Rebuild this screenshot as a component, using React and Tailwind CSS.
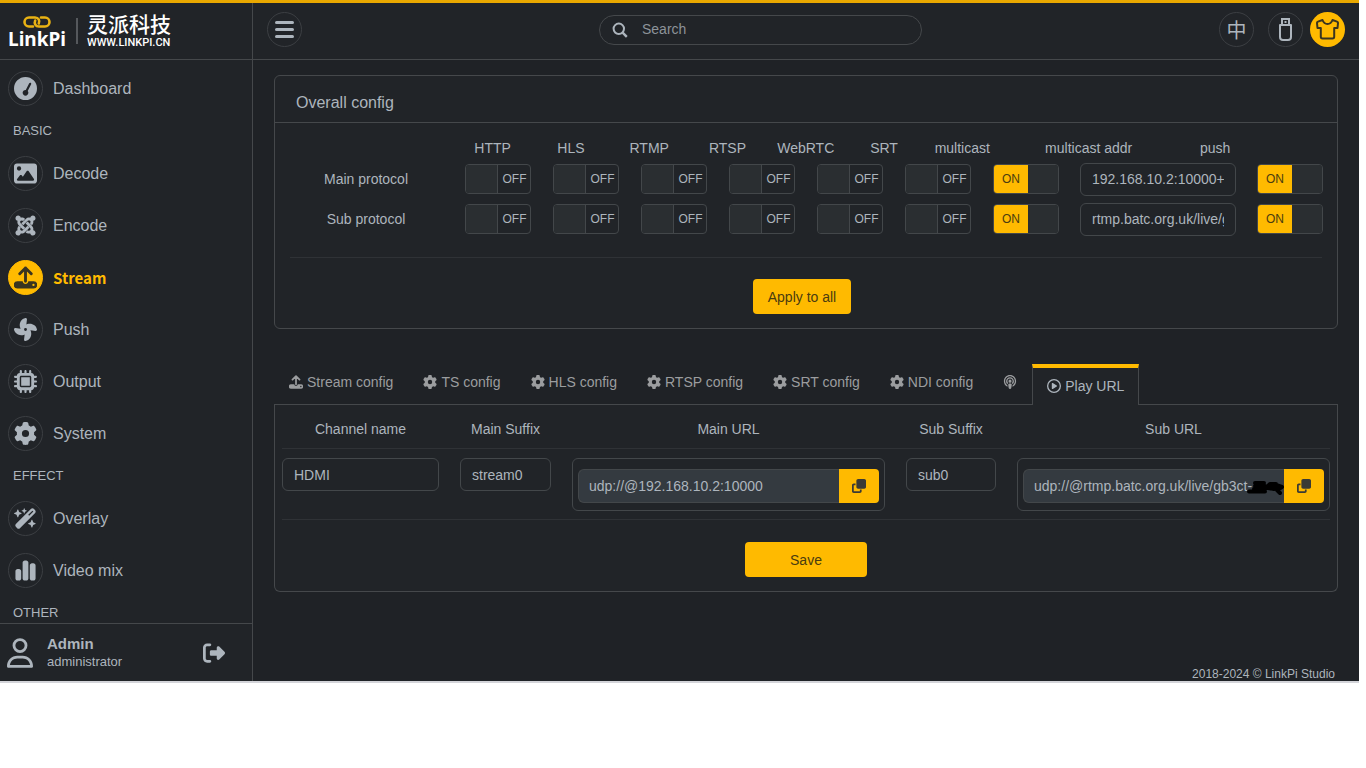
import { useState } from "react";
import clsx from "clsx";
import {
  FaChartSimple,
  FaClone,
  FaFan,
  FaGaugeSimpleHigh,
  FaGear,
  FaImage,
  FaJoomla,
  FaMicrochip,
  FaPodcast,
  FaRegCirclePlay,
  FaRegUser,
  FaRightFromBracket,
  FaWandMagicSparkles,
} from "react-icons/fa6";

const PROTOCOLS = ["HTTP", "HLS", "RTMP", "RTSP", "WebRTC", "SRT", "multicast"];

const MENU = [
  { items: [{ name: "Dashboard", icon: FaGaugeSimpleHigh }] },
  {
    title: "BASIC",
    items: [
      { name: "Decode", icon: FaImage },
      { name: "Encode", icon: FaJoomla },
      { name: "Stream", icon: UploadIcon, active: true },
      { name: "Push", icon: FaFan },
      { name: "Output", icon: FaMicrochip },
      { name: "System", icon: FaGear },
    ],
  },
  {
    title: "EFFECT",
    items: [
      { name: "Overlay", icon: FaWandMagicSparkles },
      { name: "Video mix", icon: FaChartSimple },
    ],
  },
  { title: "OTHER", items: [] },
];

const TABS = [
  { name: "Stream config", icon: UploadIcon },
  { name: "TS config", icon: FaGear },
  { name: "HLS config", icon: FaGear },
  { name: "RTSP config", icon: FaGear },
  { name: "SRT config", icon: FaGear },
  { name: "NDI config", icon: FaGear },
  { label: "WebRTC", icon: FaPodcast },
  { name: "Play URL", icon: FaRegCirclePlay, active: true },
];

// Arrow rising out of a drive
function UploadIcon({ className }) {
  return (
    <svg viewBox="0 0 24 24" className={className} fill="none" aria-hidden="true">
      <path
        d="M12 16V2M6 8l6-6 6 6"
        stroke="currentColor"
        strokeWidth="3"
        strokeLinecap="round"
        strokeLinejoin="round"
      />
      <path
        d="M3.500 16H9c.4 1.900 1.500 2.800 3 2.800s2.600-.9 3-2.800h5.500a3.500 3.500 0 0 1 0 7.500h-17a3.500 3.500 0 0 1 0-7.500Zm16.800 2.500a1.200 1.200 0 1 0 0 2.400 1.200 1.200 0 0 0 0-2.400Z"
        fill="currentColor"
        fillRule="evenodd"
      />
    </svg>
  );
}

function UsbIcon() {
  return (
    <svg viewBox="0 0 13 23" className="h-[23px] w-[13px]" fill="none" stroke="currentColor" strokeWidth="2" aria-hidden="true">
      <path d="M3 7V1h7v6" />
      <path d="M1 7h11v12a3 3 0 0 1-3 3H4a3 3 0 0 1-3-3Z" strokeLinejoin="round" />
      <path d="M5.500 4h2" strokeWidth="2" />
    </svg>
  );
}

function ShirtIcon() {
  return (
    <svg viewBox="0 0 23 21" className="h-[21px] w-[23px]" fill="none" stroke="currentColor" strokeWidth="2" strokeLinejoin="round" aria-hidden="true">
      <path d="M6.500 1 2 2.600a1.500 1.500 0 0 0-1 1.500L1.500 9h3.300v8.800c0 1 .7 1.700 1.700 1.700h10c1 0 1.700-.7 1.700-1.700V9h3.300l.5-4.900a1.500 1.500 0 0 0-1-1.500L16.500 1c-.9 2.400-2.200 4-5 4s-4.100-1.600-5-4Z" />
    </svg>
  );
}

function SearchIcon() {
  return (
    <svg viewBox="0 0 16 16" className="size-4 shrink-0" fill="none" stroke="currentColor" strokeWidth="2" aria-hidden="true">
      <circle cx="6.800" cy="6.800" r="5.200" />
      <path d="m10.600 10.600 4.200 4.200" strokeWidth="2.400" />
    </svg>
  );
}

function Logo() {
  return (
    <a href="#home" aria-label="LinkPi" className="flex h-[57px] items-center border-b border-[#45484b] pl-[7px] text-white">
      <div className="flex w-[60px] flex-col items-center pt-1">
        <svg viewBox="0 0 28 12" className="h-3 w-7" fill="none" stroke="#e9b213" strokeWidth="2.600" strokeLinecap="round" aria-hidden="true">
          <path d="M10 10.500H6a4.500 4.500 0 0 1 0-9h6c3.600 0 5 3.200 3.800 6" />
          <path d="M18 1.500h4a4.500 4.500 0 0 1 0 9h-6c-3.600 0-5-3.200-3.800-6" />
        </svg>
        <span className="font-['Noto_Sans',sans-serif] text-[19px]/[22px] font-bold">LinkPi</span>
      </div>
      <span className="ml-[9px] h-[26px] w-0.5 bg-[#55585c]" />
      <div className="ml-[9px] flex flex-col gap-1">
        <span className="font-['Noto_Sans_CJK_SC',sans-serif] text-[21px]/[20px] font-medium">灵派科技</span>
        <span className="font-['Roboto',sans-serif] text-[11px]/[12px] font-medium">WWW.LINKPI.CN</span>
      </div>
    </a>
  );
}

function Sidebar() {
  return (
    <aside className="flex w-[253px] shrink-0 flex-col border-r border-[#45484b] bg-[#212428]">
      <Logo />
      <nav className="min-h-0 flex-1 overflow-hidden pt-[3px]">
        {MENU.map((group, i) => (
          <div key={i}>
            {group.title && <h2 className="h-[33px] pl-[13px] text-[13px]/[32px]">{group.title}</h2>}
            {group.items.map(({ name, icon: Icon, active }) => (
              <a
                key={name}
                href={`#${name}`}
                className={clsx("flex items-center gap-[10px] pt-2 pb-[9px] pl-2", active && "text-[#ffba00]")}
              >
                <span
                  className={clsx(
                    "flex size-[35px] items-center justify-center rounded-full border",
                    active ? "border-[#ffba00] bg-[#ffba00] text-[#3a3520]" : "border-[#3c3f43]",
                  )}
                >
                  <Icon className="size-[23px]" />
                </span>
                <span
                  className={clsx(
                    active ? "font-['Noto_Sans_CJK_SC','Noto_Sans',sans-serif] text-[15px]/[20px] font-bold" : "text-[16px]/[20px]",
                  )}
                >
                  {name}
                </span>
              </a>
            ))}
          </div>
        ))}
      </nav>
      <div className="flex h-[58px] shrink-0 items-center border-t border-[#45484b] pl-[7px]">
        <FaRegUser className="h-[30px] w-[26px]" />
        <div className="ml-[14px] flex flex-1 flex-col">
          <strong className="text-[15px]/[19px]">Admin</strong>
          <span className="text-[13px]/[18px]">administrator</span>
        </div>
        <button type="button" aria-label="Log out" className="mr-[27px]">
          <FaRightFromBracket className="size-[22px]" />
        </button>
      </div>
    </aside>
  );
}

function Header() {
  const round = "flex size-[35px] items-center justify-center rounded-full border border-[#3c3f43]";
  return (
    <header className="flex h-[57px] shrink-0 items-center justify-between border-b border-[#45484b] bg-[#212428] px-[14px] pb-[3px]">
      <button type="button" aria-label="Toggle menu" className={round}>
        <svg viewBox="0 0 21 19" className="h-[19px] w-[21px]" stroke="currentColor" strokeWidth="3" strokeLinecap="round" aria-hidden="true">
          <path d="M2.500 2.500h16M2.500 9.500h16M2.500 16.500h16" />
        </svg>
      </button>
      <label className="flex h-[30px] w-[323px] items-center gap-[14px] rounded-full border border-[#45484b] px-3">
        <SearchIcon />
        <input
          type="search"
          aria-label="Search"
          placeholder="Search"
          className="min-w-0 flex-1 bg-transparent text-[14px] outline-none placeholder:text-[#8d9399]"
        />
      </label>
      <div className="flex items-center">
        <button type="button" aria-label="Language" className={clsx(round, "mr-[14px] font-['Noto_Sans_CJK_SC',sans-serif] text-[20px]/[20px]")}>
          中
        </button>
        <button type="button" aria-label="USB storage" className={clsx(round, "mr-[7px]")}>
          <UsbIcon />
        </button>
        <button
          type="button"
          aria-label="Theme"
          className="flex size-[35px] items-center justify-center rounded-full bg-[#ffba00] text-[#3a3520]"
        >
          <ShirtIcon />
        </button>
      </div>
    </header>
  );
}

function Toggle({ label, defaultOn = false }) {
  const [on, setOn] = useState(defaultOn);
  return (
    <label className="relative flex h-[30px] w-[66px] cursor-pointer overflow-hidden rounded-[4px] border border-[#43474a] text-[12px]/[28px]">
      <input
        type="checkbox"
        aria-label={label}
        checked={on}
        onChange={(e) => setOn(e.target.checked)}
        className="absolute inset-0 size-full cursor-pointer opacity-0"
      />
      {on ? (
        <>
          <span className="w-[34px] bg-[#ffba00] text-center text-[#4a3c10]">ON</span>
          <span className="flex-1 bg-[#2a2e31]" />
        </>
      ) : (
        <>
          <span className="w-8 border-r border-[#43474a] bg-[#2a2e31]" />
          <span className="flex-1 pl-px text-center">OFF</span>
        </>
      )}
    </label>
  );
}

const field = "h-[33px] w-full min-w-0 rounded-[6px] border border-[#43474a] bg-transparent px-[11px] text-[14px] outline-none";

function ProtocolRow({ name, addr }) {
  return (
    <div className="grid h-10 grid-cols-12 items-center">
      <span className="col-span-2 text-center">{name}</span>
      {PROTOCOLS.map((p) => (
        <div key={p} className="flex justify-center">
          <Toggle label={`${name} ${p}`} defaultOn={p === "multicast"} />
        </div>
      ))}
      <div className="col-span-2 px-[10px]">
        <input type="text" aria-label={`${name} multicast addr`} defaultValue={addr} className={field} />
      </div>
      <div className="flex justify-center">
        <Toggle label={`${name} push`} defaultOn />
      </div>
    </div>
  );
}

function OverallConfig() {
  return (
    <section className="rounded-[6px] border border-[#45484b] bg-[#212428]">
      <h1 className="h-[47px] border-b border-[#45484b] pt-[7px] pl-[21px] text-[16px]/[39px]">Overall config</h1>
      <div className="px-[3px] pt-[14px] text-[14px]/[20px]">
        <div className="grid h-[22px] grid-cols-[352fr_repeat(7,157fr)_350fr_157fr_160fr] items-center text-center">
          <span />
          {PROTOCOLS.map((p) => (
            <span key={p}>{p}</span>
          ))}
          <span>multicast addr</span>
          <span>push</span>
        </div>
        <ProtocolRow name="Main protocol" addr="192.168.10.2:10000+" />
        <ProtocolRow name="Sub protocol" addr="rtmp.batc.org.uk/live/gb3ct" />
        <hr className="mx-3 mt-[18px] border-[#2f3236]" />
        <div className="flex justify-center pt-[21px] pr-2 pb-[14px]">
          <button type="button" className="h-[35px] rounded-[4px] bg-[#ffba00] px-[15px] text-[#4a3c10]">
            Apply to all
          </button>
        </div>
      </div>
    </section>
  );
}

function UrlField({ label, value, children }) {
  return (
    <div className="h-[53px] rounded-[6px] border border-[#43474a] px-[5px] pt-[10px]">
      <div className="relative flex h-[34px]">
        <input
          type="text"
          readOnly
          aria-label={label}
          value={value}
          className="min-w-0 flex-1 rounded-l-[6px] border border-r-0 border-[#43474a] bg-[#343a40] px-[10px] text-[14px] outline-none"
        />
        <button
          type="button"
          aria-label={`Copy ${label}`}
          className="flex w-10 items-center justify-center rounded-r-[4px] bg-[#ffba00] text-[#3a3a35]"
        >
          <FaClone className="size-[14px]" />
        </button>
        {children}
      </div>
    </div>
  );
}

function PlayUrls() {
  const row = "grid grid-cols-[157fr_91fr_313fr_90fr_313fr] gap-x-[21px] border-b border-[#2f3236]";
  return (
    <div className="rounded-b-[6px] border border-t-0 border-[#45484b] bg-[#212428] px-[7px] pt-[5px] pb-[14px] text-[14px]/[20px]">
      <table className="block w-full">
        <thead className="block">
          <tr className={clsx(row, "h-[39px] items-center")}>
            <th className="font-normal">Channel name</th>
            <th className="font-normal">Main Suffix</th>
            <th className="font-normal">Main URL</th>
            <th className="font-normal">Sub Suffix</th>
            <th className="font-normal">Sub URL</th>
          </tr>
        </thead>
        <tbody className="block">
          <tr className={clsx(row, "pt-[9px] pb-2")}>
            <td>
              <input type="text" aria-label="Channel name" defaultValue="HDMI" className={field} />
            </td>
            <td>
              <input type="text" aria-label="Main Suffix" defaultValue="stream0" className={field} />
            </td>
            <td>
              <UrlField label="Main URL" value="udp://@192.168.10.2:10000" />
            </td>
            <td>
              <input type="text" aria-label="Sub Suffix" defaultValue="sub0" className={field} />
            </td>
            <td>
              <UrlField label="Sub URL" value="udp://@rtmp.batc.org.uk/live/gb3ct-">
                {/* stream key is blacked out */}
                <svg viewBox="0 0 40 16" className="absolute top-[11px] right-[38px] h-4 w-10" stroke="#000" fill="none" strokeLinecap="round" strokeLinejoin="round" aria-hidden="true">
                  <path d="M3 11.500h16M9 3h9M9 6h10l-3 4M8 9h11l5-5h6l-2 5-6-1 8-3 6 2-5 3 3 3" strokeWidth="4" />
                </svg>
              </UrlField>
            </td>
          </tr>
        </tbody>
      </table>
      <div className="flex justify-center pt-[22px]">
        <button type="button" className="h-[35px] w-[122px] rounded-[4px] bg-[#ffba00] text-[#4a3c10]">
          Save
        </button>
      </div>
    </div>
  );
}

function Tabs() {
  return (
    <div role="tablist" className="flex text-[14px]/[20px] text-[#9b9d9f]">
      {TABS.map(({ name, label, icon: Icon, active }) => (
        <button
          key={name || label}
          type="button"
          role="tab"
          aria-selected={Boolean(active)}
          aria-label={name || label}
          className={clsx(
            "flex h-[41px] items-start gap-1 pt-2",
            active
              ? "border-x border-t-4 border-x-[#45484b] border-t-[#ffba00] bg-[#212428] px-[14px] text-[#adb5bd]"
              : "border-b border-[#45484b] px-[15px]",
          )}
        >
          <Icon className="mt-[3px] size-[14px]" />
          {name}
        </button>
      ))}
      <div className="flex-1 border-b border-[#45484b]" />
    </div>
  );
}

export default function App() {
  return (
    <div className="h-screen bg-white pr-[7px] pb-[85px] font-['Liberation_Sans',Arial,sans-serif] text-[#adb5bd]">
      <div className="flex h-full flex-col border-t-[3px] border-b-2 border-t-[#e9a800] border-b-[#d3d4d9] bg-[#1f2226]">
        <div className="flex min-h-0 flex-1">
          <Sidebar />
          <div className="flex min-w-0 flex-1 flex-col">
            <Header />
            <main className="flex-1 px-[21px] pt-[15px]">
              <OverallConfig />
              <div className="mt-[35px]">
                <Tabs />
                <PlayUrls />
              </div>
            </main>
            <footer className="pr-6 text-right text-[12px]/[14px]">2018-2024 © LinkPi Studio</footer>
          </div>
        </div>
      </div>
    </div>
  );
}
